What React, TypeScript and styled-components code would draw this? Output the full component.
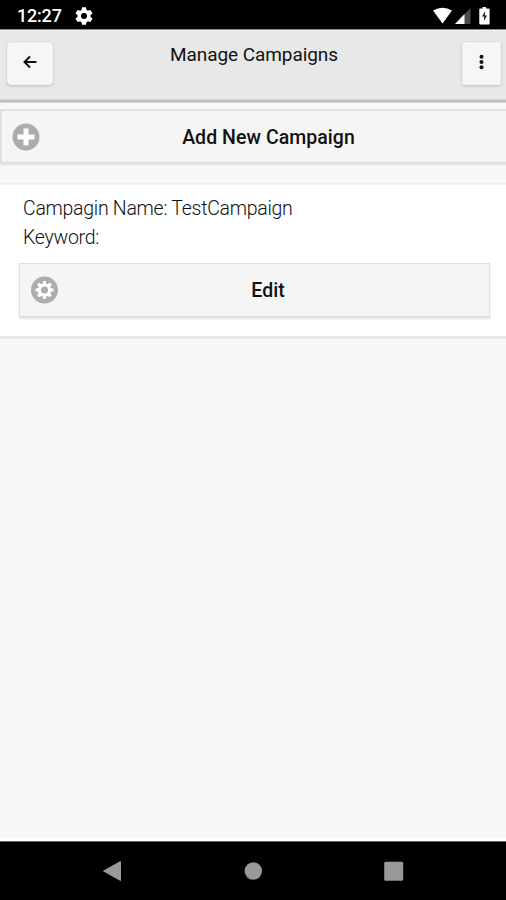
import React from "react";
import styled, { createGlobalStyle } from "styled-components";

const GlobalStyle = createGlobalStyle`
  *, *::before, *::after { box-sizing: border-box; }
  body { margin: 0; background: #f8f8f8; font-family: Roboto, sans-serif; color: #111; }
  button { font-family: inherit; color: inherit; padding: 0; }
  svg { display: block; }
`;

const Screen = styled.div`
  display: flex;
  flex-direction: column;
  width: 100%;
  height: 900px;
  overflow: hidden;
  background: #f8f8f8;
`;

const StatusBar = styled.div`
  display: flex;
  align-items: center;
  flex: none;
  height: 30px;
  padding: 2px 16px 0 17px;
  background: #000;
  border-bottom: 1px solid #8b8b8b;
  color: #fff;
`;

const Clock = styled.span`
  width: 58px;
  font-size: 18px;
  line-height: 28px;
  font-weight: 500;
  letter-spacing: -0.2px;
`;

const StatusIcons = styled.div`
  display: flex;
  align-items: center;
  margin-left: auto;
`;

const Header = styled.header`
  display: flex;
  flex: none;
  justify-content: space-between;
  align-items: flex-start;
  height: 73px;
  padding: 11px 5px 0 7px;
  background: linear-gradient(#e8e8e8 68px, #c9c9c9 69px, #b5b5b5 70px, #c8c8c8 71px, #e4e4e4 72px);
  border-top: 1px solid #f0f0f0;
`;

const HeaderButton = styled.button<{ $width: number; $radius: number }>`
  display: grid;
  place-items: center;
  width: ${(p) => p.$width}px;
  height: 43px;
  padding-bottom: 4px;
  border: 1px solid #f0f0f0;
  border-radius: ${(p) => p.$radius}px;
  background: #f6f6f6;
  box-shadow: 0 1px 3px rgba(0, 0, 0, 0.18);
`;

const Title = styled.h1`
  margin: 1px 7px 0 0;
  font-size: 19px;
  line-height: 24px;
  font-weight: 400;
  letter-spacing: -0.08px;
`;

const Content = styled.main`
  flex: 1;
  padding-top: 6px;
  border-bottom: 3px solid #fff;
`;

const ActionButton = styled.button<{ $flush?: boolean }>`
  display: grid;
  grid-template-columns: 28px 1fr;
  align-items: center;
  width: ${(p) => (p.$flush ? "calc(100% + 4px)" : "100%")};
  height: 55px;
  padding: ${(p) => (p.$flush ? "0 11px 0 10px" : "0 11px 0 10px")};
  border: 1px solid #e0e0e0;
  border-width: ${(p) => (p.$flush ? "2px" : "1px 1px 2px")};
  background: #f5f5f5;
  box-shadow: 0 1px 2px rgba(0, 0, 0, 0.1);
`;

const ButtonText = styled.span`
  padding-top: 1px;
  font-size: 19.5px;
  line-height: 25px;
  font-weight: 500;
  letter-spacing: 0.05px;
  text-align: center;
`;

const Card = styled.section`
  height: 156px;
  margin-top: 19px;
  padding: 10px 16px 0 19px;
  background: #fff;
  border-top: 2px solid #f0f0f0;
  border-bottom: 3px solid #e8e8e8;
`;

const Detail = styled.p`
  margin: 0 0 0 4px;
  font-size: 19.5px;
  line-height: 28.5px;
  font-weight: 300;
  letter-spacing: -0.28px;
`;

const EditArea = styled.div`
  margin-top: 11px;
`;

const NavBar = styled.nav`
  display: flex;
  flex: none;
  align-items: center;
  justify-content: space-between;
  height: 59px;
  padding: 0 102px;
  border-top: 1px solid #666;
  background: #000;
`;

const GEAR =
  "M19.14 12.94c.04-.3.06-.61.06-.94s-.02-.64-.07-.94l2.03-1.58a.49.49 0 0 0 .12-.61l-1.92-3.32a.49.49 0 0 0-.59-.22l-2.39.96a7 7 0 0 0-1.62-.94l-.36-2.54a.48.48 0 0 0-.48-.41h-3.84a.47.47 0 0 0-.47.41l-.36 2.54c-.59.24-1.13.57-1.62.94l-2.39-.96a.48.48 0 0 0-.59.22L2.74 8.87a.48.48 0 0 0 .12.61l2.03 1.58a7.6 7.6 0 0 0 0 1.88l-2.03 1.58a.49.49 0 0 0-.12.61l1.92 3.32c.12.22.37.29.59.22l2.39-.96c.5.38 1.03.7 1.62.94l.36 2.54c.05.24.24.41.48.41h3.84c.24 0 .44-.17.47-.41l.36-2.54c.59-.24 1.13-.56 1.62-.94l2.39.96c.22.08.47 0 .59-.22l1.92-3.32a.48.48 0 0 0-.12-.61z";

const StatusGear = () => (
  <svg width="18" height="18" viewBox="2 2 20 20">
    <path d={GEAR} fill="#fff" />
    <circle cx="12" cy="12" r="3.3" fill="#000" />
  </svg>
);

const SignalIcons = () => (
  <svg width="58" height="20" viewBox="0 0 58 20">
    <path d="M1 4.5Q10.500-1 20 4.5L10.500 17.5Z" fill="#fff" />
    <path d="M38.500 2V18H23Z" fill="#4b4b4b" />
    <path d="M32.500 8V18H23Z" fill="#fff" />
    <path d="M50.500 1h3.500v1.500h2.600q1 0 1 1v14q0 1-1 1h-8.300q-1 0-1-1v-14q0-1 1-1h2.200Z" fill="#fff" />
    <path d="m53.200 5-3.200 5.600h2.100v4.400l2.900-5.600h-2.100Z" fill="#222" />
  </svg>
);

const BackArrow = () => (
  <svg width="16" height="16" viewBox="0 0 16 16" fill="none" stroke="#111" strokeWidth="2">
    <path d="M14.500 8H3M8 2.500 2.500 8 8 13.500" />
  </svg>
);

const MoreDots = () => (
  <svg width="6" height="18" viewBox="0 0 6 18" fill="#111">
    <circle cx="3.500" cy="3.700" r="2" />
    <circle cx="3.500" cy="9" r="2" />
    <circle cx="3.500" cy="14.300" r="2" />
  </svg>
);

const PlusDisc = () => (
  <svg width="28" height="28" viewBox="0 0 28 28">
    <circle cx="14" cy="14" r="13.500" fill="#adadad" />
    <path d="M11.500 5.500h5v6h6v5h-6v6h-5v-6h-6v-5h6Z" fill="#fff" />
  </svg>
);

const GearDisc = () => (
  <svg width="28" height="28" viewBox="0 0 28 28">
    <circle cx="14.500" cy="14" r="13.500" fill="#adadad" />
    <g fill="#fff" transform="translate(14.500 14)">
      {[0, 45, 90, 135].map((angle) => (
        <path key={angle} d="M-1.300-9h2.600l.9 4v10l-.9 4h-2.600l-.9-4v-10Z" transform={`rotate(${angle})`} />
      ))}
      <circle r="6.600" />
      <circle r="3.600" fill="#adadad" />
    </g>
  </svg>
);

const NavIcons = {
  back: (
    <svg width="20" height="22" viewBox="0 0 20 22">
      <path d="M18.500 1.500v19L1.500 11Z" fill="#999" stroke="#999" strokeLinejoin="round" />
    </svg>
  ),
  home: (
    <svg width="18" height="18" viewBox="0 0 18 18">
      <circle cx="9.300" cy="9" r="8.700" fill="#999" />
    </svg>
  ),
  recent: (
    <svg width="20" height="20" viewBox="0 0 20 20">
      <rect x=".2" y=".8" width="19" height="19" rx="1.500" fill="#999" />
    </svg>
  ),
};

export default function App() {
  return (
    <>
      <GlobalStyle />
      <Screen>
        <StatusBar>
          <Clock>12:27</Clock>
          <StatusGear />
          <StatusIcons>
            <SignalIcons />
          </StatusIcons>
        </StatusBar>
        <Header>
          <HeaderButton $width={46} $radius={4} aria-label="Back">
            <BackArrow />
          </HeaderButton>
          <Title>Manage Campaigns</Title>
          <HeaderButton $width={39} $radius={2} aria-label="More options">
            <MoreDots />
          </HeaderButton>
        </Header>
        <Content>
          <ActionButton $flush>
            <PlusDisc />
            <ButtonText>Add New Campaign</ButtonText>
          </ActionButton>
          <Card>
            <Detail>Campagin Name: TestCampaign</Detail>
            <Detail>Keyword:</Detail>
            <EditArea>
              <ActionButton>
                <GearDisc />
                <ButtonText>Edit</ButtonText>
              </ActionButton>
            </EditArea>
          </Card>
        </Content>
        <NavBar>
          {NavIcons.back}
          {NavIcons.home}
          {NavIcons.recent}
        </NavBar>
      </Screen>
    </>
  );
}
